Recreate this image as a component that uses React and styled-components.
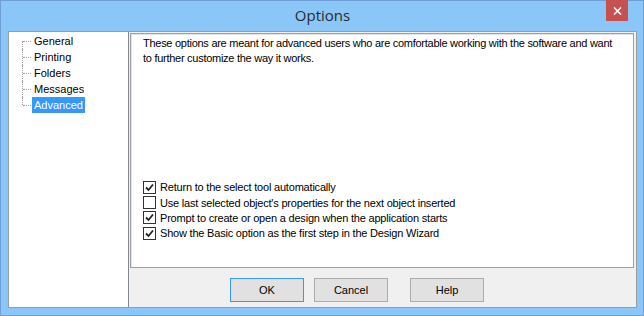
import React from "react"
import styled, { createGlobalStyle } from "styled-components"

const GlobalStyle = createGlobalStyle`
  html, body {
    margin: 0;
    padding: 0;
    background: #ffffff;
  }
`

const Window = styled.div`
  box-sizing: border-box;
  width: 644px;
  height: 316px;
  background: #8ac6f8;
  border: 1px solid #6e9ed3;
  display: flex;
  flex-direction: column;
  padding: 0 6px 7px 7px;
`

const TitleBar = styled.div`
  height: 30px;
  display: flex;
  align-items: center;
  justify-content: center;
  position: relative;
  font-family: "Open Sans", "Noto Sans", sans-serif;
  font-size: 15px;
  color: #2b2b2b;
  padding-bottom: 2px;
  box-sizing: border-box;
`

const CloseButton = styled.div`
  position: absolute;
  top: -1px;
  right: 9px;
  width: 22px;
  height: 21px;
  background: #c75050;
  display: flex;
  align-items: center;
  justify-content: center;
`

const Client = styled.div`
  flex: 1;
  display: flex;
  border: 1px solid #9c9c9c;
  background: #f0f0f0;
  font-family: "Liberation Sans", Arial, sans-serif;
  font-size: 11px;
  color: #000;
`

const Tree = styled.div`
  width: 106px;
  flex: none;
  background: #fff;
  border-right: 1px solid #828790;
  padding-top: 1px;
  padding-left: 13px;
`

const TreeItem = styled.div`
  position: relative;
  height: 16px;
  display: flex;
  align-items: center;
  padding-left: 10px;

  &::before {
    content: "";
    position: absolute;
    left: 0;
    top: ${p => (p.$first ? "8px" : "0")};
    height: ${p => (p.$first || p.$last ? "8px" : "16px")};
    border-left: 1px dotted #a0a0a0;
  }

  &::after {
    content: "";
    position: absolute;
    left: 1px;
    top: 8px;
    width: 8px;
    border-top: 1px dotted #a0a0a0;
  }
`

const TreeLabel = styled.span`
  padding: 0 2px;
  line-height: 16px;
  background: ${p => (p.$selected ? "#3399ff" : "transparent")};
  color: ${p => (p.$selected ? "#fff" : "#000")};
`

const Main = styled.div`
  flex: 1;
  display: flex;
  flex-direction: column;
`

const Panel = styled.div`
  margin: 1px 2px 0 1px;
  height: 235px;
  box-sizing: border-box;
  background: #fff;
  border: 1px solid #a0a0a0;
  box-shadow: inset 1px 1px 0 #e3e3e3;
  display: flex;
  flex-direction: column;
  padding: 2px 4px 26px 12px;
`

const Description = styled.p`
  margin: 0;
  max-width: 475px;
  line-height: 15px;
  letter-spacing: -0.27px;
`

const OptionList = styled.div`
  margin-top: auto;
  display: flex;
  flex-direction: column;
`

const OptionRow = styled.label`
  height: 15.4px;
  display: flex;
  align-items: center;
  gap: 4px;
  letter-spacing: -0.2px;
`

const Box = styled.span`
  width: 11px;
  height: 11px;
  flex: none;
  border: 1px solid #333;
  background: #fff;
  display: flex;
  align-items: center;
  justify-content: center;
`

const Footer = styled.div`
  flex: 1;
  display: flex;
  align-items: flex-start;
  padding-top: 10px;
  padding-left: 101px;
`

const Button = styled.button`
  width: 74px;
  height: 24px;
  margin-left: ${p => p.$gap || 0}px;
  background: #e1e1e1;
  border: 1px solid ${p => (p.$default ? "#3399ff" : "#adadad")};
  font-family: "Liberation Sans", Arial, sans-serif;
  font-size: 11px;
  color: #000;
  padding: 0;
`

const Check = () => (
  <svg width="9" height="9" viewBox="0 0 9 9">
    <path d="M1 4.5 L3.5 7 L8 1.5" fill="none" stroke="#222" strokeWidth="1.8" />
  </svg>
)

const options = [
  { label: "Return to the select tool automatically", checked: true },
  { label: "Use last selected object's properties for the next object inserted", checked: false },
  { label: "Prompt to create or open a design when the application starts", checked: true },
  { label: "Show the Basic option as the first step in the Design Wizard", checked: true },
]

const pages = ["General", "Printing", "Folders", "Messages", "Advanced"]

const App = () => {
  return (
    <Window>
      <GlobalStyle />
      <TitleBar>
        Options
        <CloseButton>
          <svg width="9" height="8" viewBox="0 0 9 8">
            <path d="M1 0.5 L8 7.5 M8 0.5 L1 7.5" stroke="#fff" strokeWidth="1.6" />
          </svg>
        </CloseButton>
      </TitleBar>
      <Client>
        <Tree>
          {pages.map((name, i) => (
            <TreeItem key={name} $first={i === 0} $last={i === pages.length - 1}>
              <TreeLabel $selected={name === "Advanced"}>{name}</TreeLabel>
            </TreeItem>
          ))}
        </Tree>
        <Main>
          <Panel>
            <Description>
              These options are meant for advanced users who are comfortable working with the software and want
              to further customize the way it works.
            </Description>
            <OptionList>
              {options.map(({ label, checked }) => (
                <OptionRow key={label}>
                  <Box>{checked && <Check />}</Box>
                  {label}
                </OptionRow>
              ))}
            </OptionList>
          </Panel>
          <Footer>
            <Button $default>OK</Button>
            <Button $gap={10}>Cancel</Button>
            <Button $gap={22}>Help</Button>
          </Footer>
        </Main>
      </Client>
    </Window>
  )
}

export default App
